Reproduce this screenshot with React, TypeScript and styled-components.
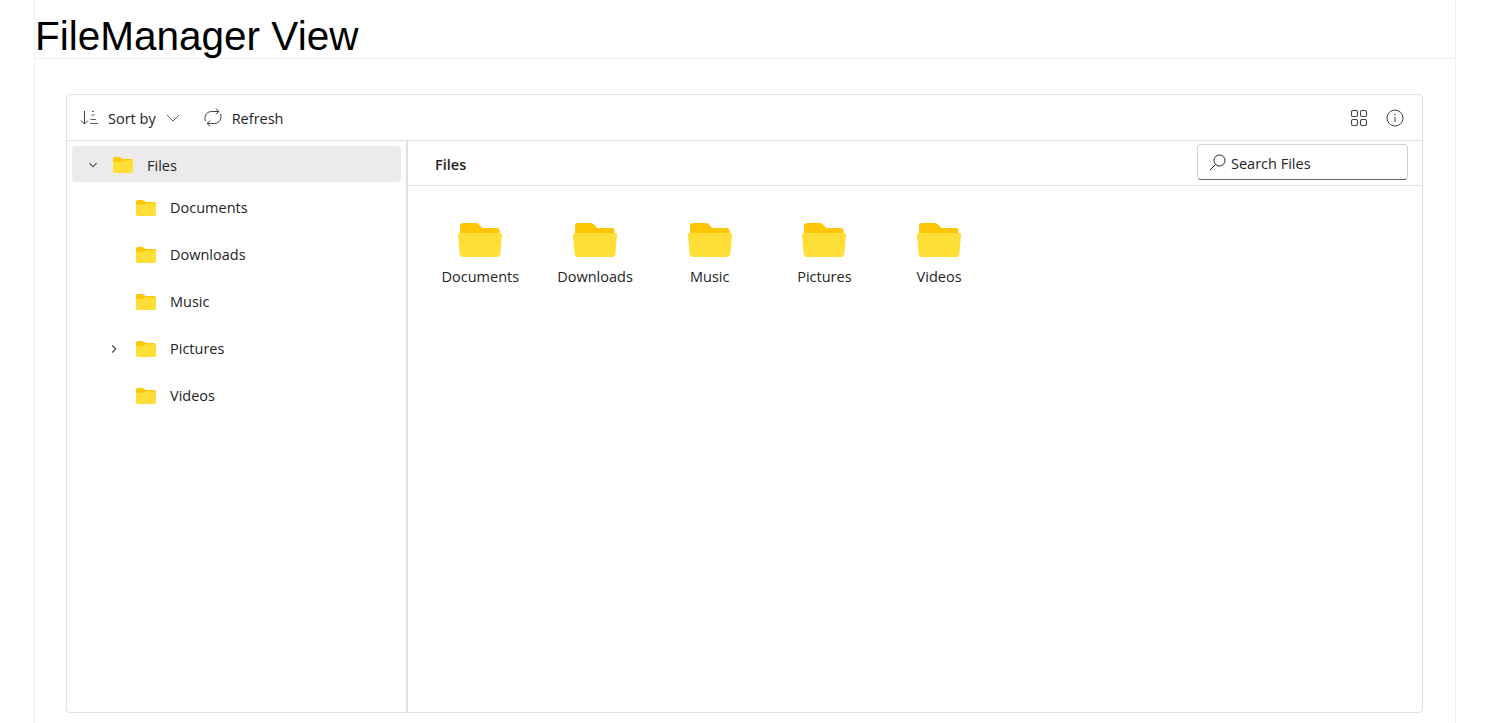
import React from "react";
import styled, { createGlobalStyle } from "styled-components";

const GlobalStyle = createGlobalStyle`
  html, body {
    margin: 0;
    padding: 0;
    height: 100%;
    background: #fff;
    overflow: hidden;
  }
`;

const Page = styled.div`
  box-sizing: border-box;
  width: 1422px;
  height: 723px;
  margin-left: 34px;
  border-left: 1px solid #f0f0f0;
  border-right: 1px solid #f0f0f0;
  display: flex;
  flex-direction: column;
`;

const Title = styled.h1`
  box-sizing: border-box;
  margin: 0;
  height: 59px;
  border-bottom: 1px solid #eeeeee;
  font-family: "Liberation Sans", Arial, sans-serif;
  font-weight: 400;
  font-size: 40.5px;
  line-height: 72px;
  color: #000;
  overflow: visible;
`;

const Body = styled.div`
  flex: 1;
  padding: 35px 32px 10px 31px;
  display: flex;
  min-height: 0;
`;

const Manager = styled.div`
  box-sizing: border-box;
  flex: 1;
  border: 1px solid #e0e0e0;
  border-radius: 4px;
  display: flex;
  flex-direction: column;
  font-family: "Open Sans", "Noto Sans", sans-serif;
  font-size: 14.5px;
  color: #242424;
`;

const Toolbar = styled.div`
  box-sizing: border-box;
  height: 46px;
  border-bottom: 1px solid #e0e0e0;
  padding: 0 18px 0 13px;
  display: flex;
  align-items: center;
`;

const ToolButton = styled.div<{ $ml?: number }>`
  display: flex;
  align-items: center;
  margin-left: ${(p) => p.$ml ?? 0}px;
`;

const ToolText = styled.span<{ $ml: number; $mr?: number }>`
  margin-left: ${(p) => p.$ml}px;
  margin-right: ${(p) => p.$mr ?? 0}px;
  margin-top: 2px;
`;

const Spacer = styled.div`
  flex: 1;
`;

const Panes = styled.div`
  flex: 1;
  display: flex;
  min-height: 0;
`;

const Sidebar = styled.div`
  box-sizing: border-box;
  width: 341px;
  border-right: 2px solid #e0e0e0;
  padding: 5px 5px 0 5px;
`;

const TreeRow = styled.div<{ $selected?: boolean; $level: number }>`
  box-sizing: border-box;
  height: ${(p) => (p.$selected ? 36 : 47)}px;
  border-radius: 4px;
  background: ${(p) => (p.$selected ? "#ebebeb" : "transparent")};
  display: flex;
  align-items: center;
  padding-left: ${(p) => (p.$level === 0 ? 16 : 37)}px;
  padding-top: ${(p) => (p.$selected ? 2 : 0)}px;
  margin-bottom: ${(p) => (p.$selected ? 2 : 0)}px;
`;

const Caret = styled.div`
  width: 10px;
  height: 10px;
  display: flex;
  align-items: center;
  justify-content: center;
  flex-shrink: 0;
`;

const TreeIcon = styled.div<{ $ml: number }>`
  display: flex;
  margin-left: ${(p) => p.$ml}px;
`;

const TreeLabel = styled.span`
  margin-left: 14px;
`;

const Content = styled.div`
  flex: 1;
  display: flex;
  flex-direction: column;
  min-width: 0;
`;

const Crumbs = styled.div`
  box-sizing: border-box;
  height: 45px;
  border-bottom: 1px solid #e0e0e0;
  padding: 0 14px 0 27px;
  display: flex;
  align-items: center;
  justify-content: space-between;
`;

const CrumbTitle = styled.span`
  font-weight: 600;
  margin-top: 3px;
`;

const SearchBox = styled.div`
  box-sizing: border-box;
  width: 211px;
  height: 36px;
  margin-top: -2px;
  border: 1px solid #d1d1d1;
  border-bottom-color: #616161;
  border-radius: 4px;
  padding-left: 11px;
  display: flex;
  align-items: center;
  gap: 5px;
`;

const SearchText = styled.span`
  margin-top: 2px;
`;

const Grid = styled.div`
  display: flex;
  padding: 36px 0 0 15px;
`;

const GridItem = styled.div`
  width: 114.7px;
  display: flex;
  flex-direction: column;
  align-items: center;
`;

const FolderBox = styled.div`
  display: flex;
`;

const GridName = styled.span`
  margin-top: 9px;
  line-height: 20px;
`;

const SmallFolder = () => (
  <svg width="20" height="16" viewBox="0 0 20 16">
    <path d="M0 2.200C0 .9.9 0 2.200 0h3.900c.6 0 1.100.2 1.600.6L9.600 2H18c1.100 0 2 .9 2 2v3H0z" fill="#ffc703" />
    <path d="M0 4.700h7c.5 0 1-.2 1.400-.5L9.600 3.300H18c1.100 0 2 .8 2 2v8.700c0 1.100-.9 2-2 2H2c-1.100 0-2-.9-2-2z" fill="#ffde37" />
  </svg>
);

const LargeFolder = () => (
  <svg width="46" height="36" viewBox="0 0 46 36">
    <path d="M3 4c0-1.800 1.300-3 3-3h13c.9 0 1.700.3 2.400.9L25.500 6H40c1.400 0 2.500 1.100 2.500 2.500V13H3z" fill="#ffc703" />
    <path d="M1 13c0-1.300.9-2 2-2h40c1.100 0 2 .7 2 2L43.300 32c-.2 1.800-1.400 3-3.200 3H5.900c-1.800 0-3-1.200-3.200-3z" fill="#ffde37" />
  </svg>
);

const SortIcon = () => (
  <svg width="20" height="16" viewBox="0 0 20 16" fill="none" stroke="#424242" strokeWidth="1">
    <path d="M4.500 1v13M1 10.500l3.500 3.500 3.500-3.500" />
    <path d="M11.500 5h3M10.500 9.500h5.500M10 13.500h8" stroke="#616161" />
    <path d="M12 1.500h2" stroke="#616161" />
  </svg>
);

const ChevronDown = () => (
  <svg width="14" height="14" viewBox="0 0 14 14" fill="none" stroke="#616161" strokeWidth="1">
    <path d="M1 4l6 6 6-6" />
  </svg>
);

const TreeChevronDown = () => (
  <svg width="10" height="10" viewBox="0 0 10 10" fill="none" stroke="#424242" strokeWidth="1.100">
    <path d="M1.500 3.200L5 6.800l3.500-3.600" />
  </svg>
);

const TreeChevronRight = () => (
  <svg width="10" height="10" viewBox="0 0 10 10" fill="none" stroke="#424242" strokeWidth="1.100">
    <path d="M3.200 1.500L6.800 5 3.200 8.500" />
  </svg>
);

const RefreshIcon = () => (
  <svg width="20" height="19" viewBox="0 0 20 19" fill="none" stroke="#424242" strokeWidth="1">
    <path d="M2.500 13C.7 8.500 3.800 3.500 8.500 3.500H16M12.800.7L16 3.500l-3.200 2.800" />
    <path d="M17.500 6c1.800 4.500-1.300 9.500-6 9.500H4M7.200 12.700L4 15.500l3.200 2.800" />
  </svg>
);

const GridIcon = () => (
  <svg width="18" height="18" viewBox="0 0 18 18" fill="none" stroke="#424242" strokeWidth="1.100">
    <rect x="1.500" y="1.500" width="6" height="6" rx="1.500" />
    <rect x="10.500" y="1.500" width="6" height="6" rx="1.500" />
    <rect x="1.500" y="10.500" width="6" height="6" rx="1.500" />
    <rect x="10.500" y="10.500" width="6" height="6" rx="1.500" />
  </svg>
);

const InfoIcon = () => (
  <svg width="18" height="18" viewBox="0 0 18 18" fill="none" stroke="#424242" strokeWidth="1">
    <circle cx="9" cy="9" r="8" />
    <path d="M9 8v5" />
    <circle cx="9" cy="5.500" r=".8" fill="#424242" stroke="none" />
  </svg>
);

const SearchIcon = () => (
  <svg width="17" height="17" viewBox="0 0 17 17" fill="none" stroke="#242424" strokeWidth="1">
    <circle cx="10.500" cy="6.500" r="5.500" />
    <path d="M6.500 10.500L1 16" />
  </svg>
);

const folders = ["Documents", "Downloads", "Music", "Pictures", "Videos"];

export default function App() {
  return (
    <>
      <GlobalStyle />
      <Page>
        <Title>FileManager View</Title>
        <Body>
          <Manager>
            <Toolbar>
              <ToolButton>
                <SortIcon />
                <ToolText $ml={8} $mr={10}>Sort by</ToolText>
                <ChevronDown />
              </ToolButton>
              <ToolButton $ml={23}>
                <RefreshIcon />
                <ToolText $ml={9}>Refresh</ToolText>
              </ToolButton>
              <Spacer />
              <ToolButton>
                <GridIcon />
              </ToolButton>
              <ToolButton $ml={18}>
                <InfoIcon />
              </ToolButton>
            </Toolbar>
            <Panes>
              <Sidebar>
                <TreeRow $selected $level={0}>
                  <Caret>
                    <TreeChevronDown />
                  </Caret>
                  <TreeIcon $ml={15}>
                    <SmallFolder />
                  </TreeIcon>
                  <TreeLabel>Files</TreeLabel>
                </TreeRow>
                {folders.map((name) => (
                  <TreeRow key={name} $level={1}>
                    <Caret>{name === "Pictures" && <TreeChevronRight />}</Caret>
                    <TreeIcon $ml={17}>
                      <SmallFolder />
                    </TreeIcon>
                    <TreeLabel>{name}</TreeLabel>
                  </TreeRow>
                ))}
              </Sidebar>
              <Content>
                <Crumbs>
                  <CrumbTitle>Files</CrumbTitle>
                  <SearchBox>
                    <SearchIcon />
                    <SearchText>Search Files</SearchText>
                  </SearchBox>
                </Crumbs>
                <Grid>
                  {folders.map((name) => (
                    <GridItem key={name}>
                      <FolderBox>
                        <LargeFolder />
                      </FolderBox>
                      <GridName>{name}</GridName>
                    </GridItem>
                  ))}
                </Grid>
              </Content>
            </Panes>
          </Manager>
        </Body>
      </Page>
    </>
  );
}
